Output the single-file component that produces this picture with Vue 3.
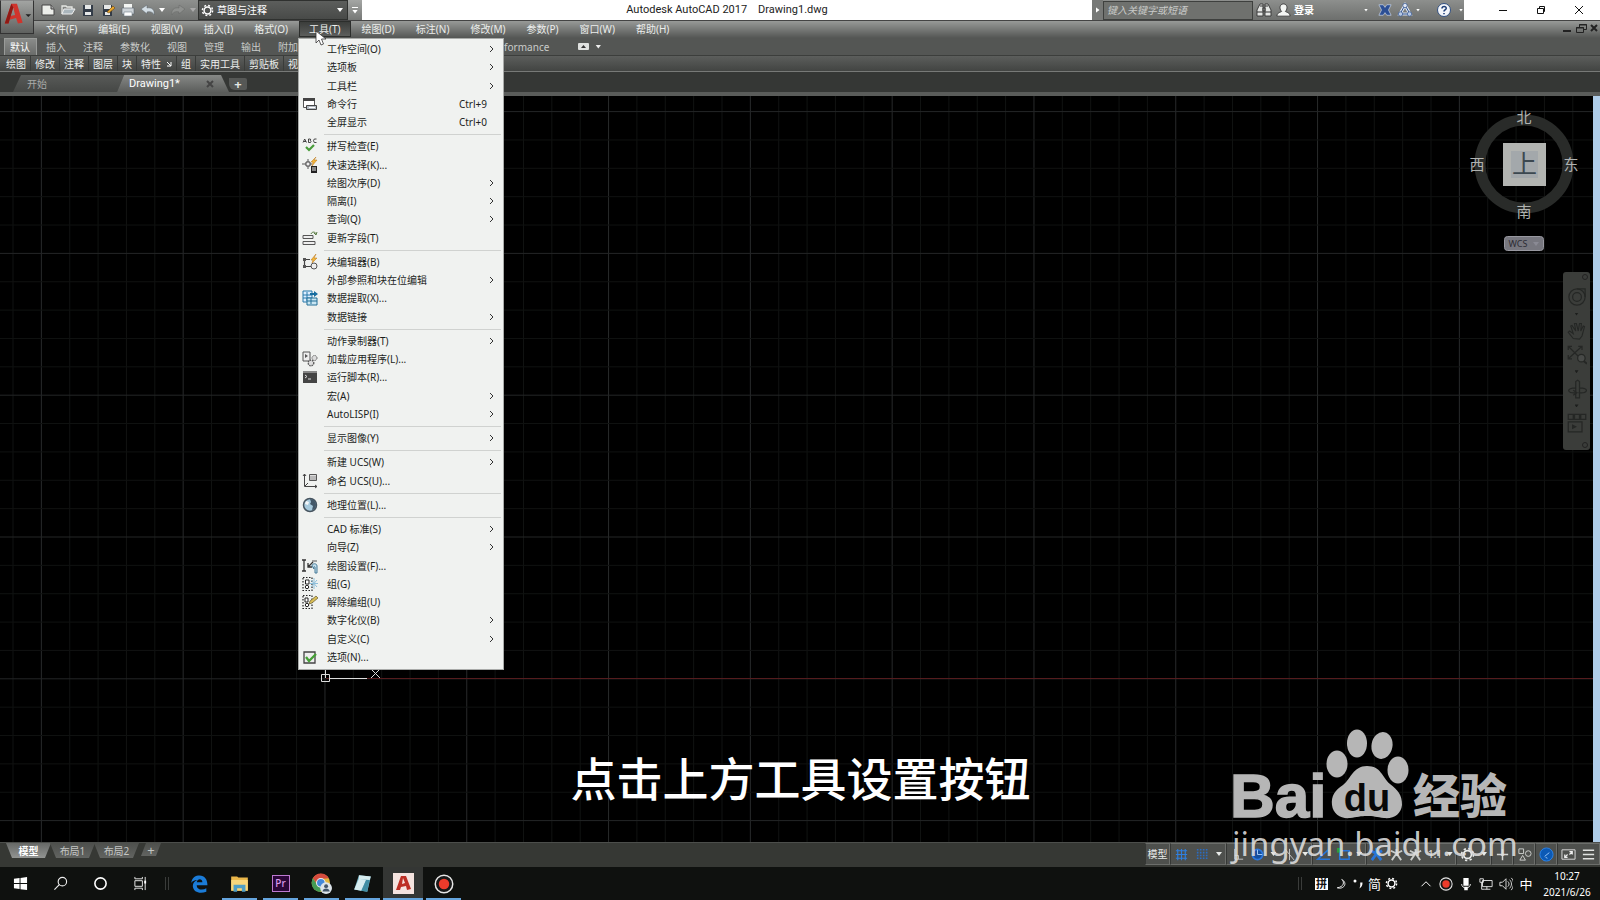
<script setup>
import { ref } from 'vue'

const icons = {
  newFile: '<path d="M2 3h9l3 4v6H2z" fill="#eceeea" stroke="#444"/><path d="M11 3v4h3" fill="#aaa" stroke="#444"/>',
  open: '<path d="M2 12V4h4l1 1h5v2" fill="none" stroke="#e6e8e4" stroke-width="1.3"/><path d="M4 7h11l-3 5H2z" fill="#aab6bc" stroke="#eee"/>',
  save: '<path d="M3 3h10v11H3z" fill="#333c48"/><path d="M5 3h6v4H5zM5 10h6v3H5z" fill="#e6e8e8"/>',
  saveAs: '<path d="M3 3h9v11H3z" fill="#333c48"/><path d="M4 3h7v4H4zM5 10h5v3H5z" fill="#e6e8e8"/><path d="M7 10l6-6 2 2-6 5z" fill="#e6a52e" stroke="#6a4510" stroke-width=".6"/>',
  print: '<path d="M4 2h8v4H4z" fill="#f4f6f4"/><path d="M2 6h12v6H2z" fill="#cdd3d8" stroke="#59636b" stroke-width=".6"/><path d="M4 10h8v4H4z" fill="#fff" stroke="#73808a" stroke-width=".6"/>',
  undo: '<path d="M1 7l6-4v3c5-1 8 2 7 7-1-3-4-4-7-3v2z" fill="#d3dde4" stroke="#59636b" stroke-width=".5"/>',
  redo: '<path d="M15 7L9 3v3C4 5 1 8 2 13c1-3 4-4 7-3v2z" fill="#8e908e" stroke="#646664" stroke-width=".5"/>',
  gear: '<circle cx="8" cy="8" r="4.2" fill="none" stroke="currentColor" stroke-width="1.8"/><circle cx="8" cy="8" r="6.3" fill="none" stroke="currentColor" stroke-width="1.8" stroke-dasharray="2.4 2.55"/>',
  bino: '<path d="M4 2h3v12H1V8zM12 2H9v12h6V8zM7 6h2v3H7z" fill="#e4e6e4" stroke="#333" stroke-width=".9"/><path d="M1 10h6M9 10h6M4 4h3M9 4h3" stroke="#333"/>',
  user: '<path d="M1 14c0-4 4-4 5-5-3-3-2-8 2-8s5 5 2 8c1 1 5 1 5 5z" fill="#f3f5f3" stroke="#333" stroke-width=".9"/>',
  exchange: '<path d="M1 2h5l2 3 2-3h5l-3 6 3 6h-5l-2-3-2 3H1l3-6z" fill="#2c4f94" stroke="#dbe4f4" stroke-width=".7"/>',
  a360: '<path d="M8 3L3 12h10z" fill="none" stroke="#dce4f2" stroke-width="3"/><path d="M8 3L3 12h10z" fill="none" stroke="#33558e"/><circle cx="8" cy="3.500" r="2.200" fill="#dce4f2" stroke="#33558e" stroke-width=".7"/><circle cx="3.500" cy="12" r="2.200" fill="#b7c8e4" stroke="#33558e" stroke-width=".7"/><circle cx="12.500" cy="12" r="2.200" fill="#b7c8e4" stroke="#33558e" stroke-width=".7"/>',
  help: '<circle cx="8" cy="8" r="6.500" fill="#f4f6fa" stroke="#315082"/><path d="M6 6.500c0-3 4.500-2.500 4.200 0C10 8 8 8 8 9.500M8 11v1.300" fill="none" stroke="#1f3f77" stroke-width="1.600"/>',
  cmdline: '<path d="M1.500 2.500h11v9h-11z" fill="#fff" stroke="#555"/><path d="M1 2h12v3H1z" fill="#444"/><path d="M4.500 9.500h10v4h-10z" fill="#b4bcc4" stroke="#444"/><path d="M7 11.500h6" stroke="#fff"/>',
  spell: '<path d="M1 4.500L2.700 1l1.800 3.500M6.500 1v3.500h2L9 3.500l-.7-.7.5-.8-.5-1zM14.500 1h-2.200l-.8 1.700.8 1.800h2.200M2 3.500h2" fill="none" stroke="#333" stroke-width=".9"/><path d="M4 9l3 3 5-5" fill="none" stroke="#489c39" stroke-width="2.200"/>',
  quick: '<path d="M0 7h10M6 2v10" stroke="#555"/><path d="M4 5h4v4H4z" fill="#eee" stroke="#444"/><path d="M14 0L9 5h2l-1 4 5-6h-3z" fill="#f2b63a" stroke="#bb7416" stroke-width=".5"/><path d="M9 9h6v7H9z" fill="#222"/><path d="M10 11h4m-4 2h4" stroke="#eee"/>',
  field: '<path d="M1 5.500h10v3H1zM1 11.500h12v3H1z" fill="#eee" stroke="#555"/><path d="M9 4c1-3 5-2 5 0m1-2l-1 3-2-2" fill="none" stroke="#597c43"/>',
  block: '<path d="M9 12.500H2.500v-7H8" fill="none" stroke="#444" stroke-width="1.200"/><path d="M1 4h3v3H1zM1 11h3v3H1z" fill="#555"/><circle cx="12" cy="12" r="3" fill="#eee" stroke="#555"/><path d="M14 0L9 6h2l-1 3 5-5h-3z" fill="#f2b63a" stroke="#bb7416" stroke-width=".5"/>',
  extract: '<path d="M1 1h9v11H1z" fill="#def" stroke="#2678aa"/><path d="M1 5h9M1 8h9M5 2v9" stroke="#2678aa"/><path d="M8 3h4V1l4 3-4 3V5H8z" fill="#176c9f"/><path d="M5 8h10v7H5z" fill="#c9e6f3" stroke="#236e96"/><path d="M5 11h10M9 8v6" stroke="#236e96"/>',
  load: '<path d="M1 1h7v9H1z" fill="#eee" stroke="#555"/><path d="M3 3l3 2-3 2z" fill="#555"/><circle cx="12.500" cy="7" r="2.500" fill="#ddd" stroke="#666" stroke-dasharray="1.500 .8"/><circle cx="9" cy="12" r="2.800" fill="#ddd" stroke="#555" stroke-width="1.300" stroke-dasharray="1.500 .8"/>',
  script: '<path d="M1 2h14v12H1z" fill="#444"/><path d="M1 2h14v2H1z" fill="#888"/><path d="M3 6l2 1.500L3 9M6 10h3" fill="none" stroke="#ddd"/>',
  ucs: '<path d="M2.500 1v12.500H15M1 3l1.500-2L4 3M13 12l2 1.500-2 1.500M3 13l3-3" fill="none" stroke="#444"/><path d="M7.500 1.500h7v6h-7z" fill="#ddd" stroke="#555"/><path d="M8 4h6M8 6h6" stroke="#777" stroke-width=".7"/>',
  geo: '<circle cx="8" cy="8" r="6.500" fill="#a7cadd" stroke="#46545f" stroke-width="1.500"/><path d="M8 2c4 0 6 3 6 6s-2 5-4 5l1-4-3-2 1-2z" fill="#435869"/><path d="M4 4l3 1-1 3-3-1z" fill="#f5f7f8"/>',
  drafting: '<path d="M2 2v11M0 2h4M0 13h4M6 9l5-5M6 5v4h4" fill="none" stroke="#333" stroke-width="1.300"/><path d="M10 3h5" stroke="#555"/><path d="M10 8c0-3 5-3 5 0v7h-2v-6c-1-1-2 0-1 2z" fill="#c5e0ee" stroke="#467b98"/>',
  group: '<path d="M1 1.500h9v13H1z" fill="none" stroke="#222" stroke-width="1.200" stroke-dasharray="1.500 1.500"/><path d="M3.500 4h3.500v4H3.500z" fill="#fff" stroke="#222"/><circle cx="5" cy="11" r="1.700" fill="#fff" stroke="#222"/><path d="M12 2v11M8 7.500h8M9 4l6 7M15 4l-6 7" stroke="#8ebfda"/>',
  ungroup: '<path d="M1 1.500h9v13H1z" fill="none" stroke="#222" stroke-width="1.200" stroke-dasharray="1.500 1.500"/><path d="M3 4h3v4H3z" fill="#fff" stroke="#222"/><circle cx="5" cy="11" r="1.700" fill="#fff" stroke="#222"/><path d="M7 10l1-3 6-5 2 2-6 5z" fill="#d9bd55" stroke="#665b32" stroke-width=".7"/>',
  options: '<path d="M2 3h11v11H2z" fill="#eee" stroke="#444" stroke-width="1.300"/><path d="M4 8l3 4 7-7" fill="none" stroke="#45a036" stroke-width="2.300"/>',
  grid: '<path d="M4 2v12M8 2v12M12 2v12M2 4h12M2 8h12M2 12h12" stroke="#2f7fe0" stroke-width="1.200"/>',
  snap: '<path d="M2 3h12M2 6h12M2 9h12M2 12h12" stroke="#2a6cc4" stroke-width="1.700" stroke-dasharray="1.700 1.500"/>',
  ortho: '<path d="M5 2v11h9M5 9h4v4" fill="none" stroke="#c6c8c6"/>',
  polar: '<circle cx="8" cy="8" r="5.500" fill="#144f9f" stroke="#2c78dd" stroke-width="1.700"/><path d="M8 8V3M8 8h5" stroke="#a8cdf9"/>',
  iso: '<path d="M3 2l10 12M8 2v12" stroke="#c6c8c6"/>',
  track: '<path d="M15 13H2L13 3" fill="none" stroke="#2775da" stroke-width="1.700"/>',
  osnap: '<path d="M4 4h10v9H4z" fill="none" stroke="#2775da" stroke-width="1.700"/><path d="M1 1h5v5H1z" fill="#2f9d3c"/>',
  scaleOn: '<path d="M8 1v6m0 0l-5 7M8 7l5 7M2 4l6 3 6-3" fill="none" stroke="#2874d8" stroke-width="3"/>',
  scale: '<path d="M8 2v5m0 0l-5 7M8 7l5 7M2 4l6 3 6-3" fill="none" stroke="#c9cbc9" stroke-width="2"/>',
  plus: '<path d="M8 2v12M2 8h12" stroke="#d5d7d5" stroke-width="1.600"/>',
  shapes: '<path d="M2 2h5v5H2zM3 14l3-5 3 5z" fill="none" stroke="#d0d2d0"/><circle cx="12" cy="7" r="3" fill="none" stroke="#d0d2d0"/>',
  perf: '<circle cx="8" cy="8" r="7" fill="#0b59b5" stroke="#2c84e7"/><path d="M6 10l5-4M7 11l2 1" stroke="#9bc7fa"/>',
  clean: '<path d="M1 3h14v10H1z" fill="none" stroke="#ddd"/><path d="M4 11l3-3M4 8v3h3M9 8l3-3M9 5h3v3" fill="none" stroke="#eee" stroke-width="1.300"/>',
  burger: '<path d="M2 3.500h12M2 8h12M2 12.500h12" stroke="#e0e2e0" stroke-width="1.500"/>',
  wheel: '<circle cx="8" cy="8" r="6.500" fill="none" stroke="#252725"/><circle cx="8" cy="8" r="3.500" fill="none" stroke="#252725"/><path d="M8 1.500h6.500V8" fill="none" stroke="#252725"/>',
  pan: '<path d="M5 14L1 9l1-1 3 2-2-6 1-.5L7 8 6 2h1.500L9 8l1-6h1.500l-.5 6 2-4 1 .5L12 12l-2 2.500z" fill="none" stroke="#252725" stroke-width=".9"/>',
  zoomExt: '<path d="M1 4V1h3M1 1l12 12M9 1h3v3M12 1L1 11M1 8v3h3" fill="none" stroke="#252725"/><circle cx="11.500" cy="10.500" r="3" fill="#484a48" stroke="#252725"/><path d="M13.500 13l2.500 2" stroke="#252725" stroke-width="1.500"/>',
  orbit: '<path d="M7 15V2l1.500-1L10 2v13zM7 7c-8 0-7 5 0 4M10 7c8 0 7 5-1 4M5 9l3 2-3 2" fill="none" stroke="#252725"/>',
  motion: '<path d="M1 1h4v4H1zM6 1h4v4H6zM11 1h4v4h-4zM1 7h11v8H1z" fill="none" stroke="#252725"/><path d="M4 9l4 2-4 2z" fill="#252725"/>',
  win: '<path d="M1 3l6-.8v5.300H1zM8 2l7-1v6.500H8zM1 8.500h6v5.300L1 13zM8 8.500h7V15l-7-1z" fill="#fff"/>',
  search: '<circle cx="10" cy="6" r="4.500" fill="none" stroke="#eee" stroke-width="1.200"/><path d="M7 9l-5.500 5.500" stroke="#eee" stroke-width="1.200"/>',
  cortana: '<circle cx="8" cy="8" r="6" fill="none" stroke="#fff" stroke-width="1.700"/>',
  taskview: '<path d="M2 5h8v6H2zM2 1v2h8V1M2 15v-2h8v2M13 1v14" fill="none" stroke="#eee"/><path d="M12 5h2v3h-2z" fill="#fff"/>',
  edge: '<path d="M1 7C2 2 5 .5 8.500 .5 13 .5 15.500 4 15.500 9H6c0 4 5 5 8.500 2.800v3C9 17 3 15.500 2.500 10 2.400 7.500 4 5.500 6.500 4.500 3.500 4.700 2 5.700 1 7zM6 6.500h5C11 3 6.500 3 6 6.500z" fill="#1b7cd8"/>',
  folder: '<path d="M1 2h5l1 1h8v11H1z" fill="#e9b64a"/><path d="M1 5h14v9H1z" fill="#f9d77c"/><path d="M3 9h10v6h-3v-3H6v3H3z" fill="#4f9fc6"/>',
  chrome: '<circle cx="7.500" cy="7.500" r="7" fill="#e2b63d"/><path d="M1.400 4A7 7 0 0 1 13.600 4L7.500 4.500 5 9z" fill="#d54b3e"/><path d="M1.400 4A7 7 0 0 0 7 14.500L9 10 4.800 9z" fill="#449b55"/><circle cx="7.500" cy="7.500" r="3.300" fill="#4489da" stroke="#eee" stroke-width=".8"/><circle cx="11.500" cy="11.500" r="4.500" fill="#dce4ea"/><circle cx="11.500" cy="10" r="1.500" fill="#43566a"/><path d="M8.800 14c0-3 5.400-3 5.400 0z" fill="#43566a"/>',
  notepad: '<path d="M5 1l10 1-3 13L1 13z" fill="#7cb9cb"/><path d="M5 1l10 1-1 3L5 4zM5 4l6 1-4 9-6-1z" fill="#d7edf0"/><path d="M11 5l3 0-2 10-5-1z" fill="#418ea4"/>',
  rec: '<circle cx="8" cy="8" r="7" fill="#181818" stroke="#e6e6e6" stroke-width="1.200"/><circle cx="8" cy="8" r="4.200" fill="#ec3b2b"/>',
  moon: '<path d="M9 2c4 3 3 10-6 11 8 3 15-6 6-11z" fill="none" stroke="#eee" stroke-width="1.300"/>',
  punct: '<circle cx="4" cy="4" r="2" fill="#fff"/><path d="M11 6h3c0 4-1 6-4 8l1-4z" fill="#fff"/>',
  up: '<path d="M2 11l6-6 6 6" fill="none" stroke="#fff" stroke-width="1.300"/>',
  mic: '<path d="M5 1h6v9H5zM6 11h4v4H6z" fill="#fff"/><path d="M3 8c0 6 10 6 10 0" fill="none" stroke="#fff"/>',
  net: '<path d="M4 4h11v7H4zM9 11v3M6 14h7M1 2h4v4H1zM3 6v8h3" fill="none" stroke="#eee"/>',
  speaker: '<path d="M1 6h3l4-4v12l-4-4H1zM10 5c2 2 2 4 0 6M12 3c3 3 3 7 0 10M14 1c4 4 3 10 0 14" fill="none" stroke="#eee"/>',
}

const menus = ['文件(F)', '编辑(E)', '视图(V)', '插入(I)', '格式(O)', '工具(T)', '绘图(D)', '标注(N)', '修改(M)', '参数(P)', '窗口(W)', '帮助(H)']
const ribbonTabs = ['默认', '插入', '注释', '参数化', '视图', '管理', '输出', '附加模块', 'A360', '精选应用', 'BIM 360', 'Performance']
const panels = ['绘图', '修改', '注释', '图层', '块', '特性', '组', '实用工具', '剪贴板', '视图']

const sub = (t) => ({ t, sub: true })
const toolGroups = [
  [sub('工作空间(O)'), sub('选项板'), sub('工具栏'), { t: '命令行', icon: 'cmdline', key: 'Ctrl+9' }, { t: '全屏显示', key: 'Ctrl+0' }],
  [{ t: '拼写检查(E)', icon: 'spell' }, { t: '快速选择(K)...', icon: 'quick' }, sub('绘图次序(D)'), sub('隔离(I)'), sub('查询(Q)'), { t: '更新字段(T)', icon: 'field' }],
  [{ t: '块编辑器(B)', icon: 'block' }, sub('外部参照和块在位编辑'), { t: '数据提取(X)...', icon: 'extract' }, sub('数据链接')],
  [sub('动作录制器(T)'), { t: '加载应用程序(L)...', icon: 'load' }, { t: '运行脚本(R)...', icon: 'script' }, sub('宏(A)'), sub('AutoLISP(I)')],
  [sub('显示图像(Y)')],
  [sub('新建 UCS(W)'), { t: '命名 UCS(U)...', icon: 'ucs' }],
  [{ t: '地理位置(L)...', icon: 'geo' }],
  [sub('CAD 标准(S)'), sub('向导(Z)'), { t: '绘图设置(F)...', icon: 'drafting' }, { t: '组(G)', icon: 'group' }, { t: '解除编组(U)', icon: 'ungroup' }, sub('数字化仪(B)'), sub('自定义(C)'), { t: '选项(N)...', icon: 'options' }],
]

const statusGroups = [
  { w: 'w24', items: ['模型'] },
  { w: 'w56', items: ['grid', 'snap', '▾'] },
  { w: 'w86', items: ['ortho', 'polar', '▾', 'iso', '▾'] },
  { w: 'w54', items: ['track', 'osnap', '▾'] },
  { w: 'w90', items: ['scaleOn', 'scale', 'scale', '1:1', '▾'] },
  { w: 'w35', items: ['gear', '▾'] },
  { w: 'w22', items: ['plus'] },
  { w: 'w22', items: ['shapes'] },
  { w: 'w22', items: ['perf'] },
  { w: 'w43', items: ['clean', 'burger'] },
]

const navItems = ['wheel', '▾', 'pan', 'zoomExt', '▾', 'orbit', '▾', 'motion']

const step = 28.36
const cols = Array.from({ length: 100 }, (_, i) => ({ p: 13 + i * step, major: i % 5 === 1 }))
const rows = Array.from({ length: 60 }, (_, i) => ({ p: 15.600 + i * step, major: i % 5 === 0 }))

const workspace = ref('草图与注释')
const query = ref('')
</script>

<template>
  <div class="app">
    <header class="head">
      <button class="logo" aria-label="应用程序菜单">
        <svg width="34" height="34" viewBox="0 0 34 34"><path d="M4 24L11 3h6l6 20-5 1-2-6-7 2-1 4zM10 16l5-1-2-8z" fill="#d0342c" fill-rule="evenodd"/><path d="M11 3l2 4-5 17H4z" fill="#8f1914"/><path d="M26 14h6l-3 3z" fill="#222"/></svg>
      </button>
      <div class="title">
        <div class="qat">
          <button v-for="n in ['newFile', 'open', 'save', 'saveAs', 'print', 'undo']" :key="n" class="q" :aria-label="n"><svg class="i" viewBox="0 0 16 16" v-html="icons[n]"></svg></button>
          <i class="arr q8"></i>
          <button class="q q22" aria-label="redo"><svg class="i" viewBox="0 0 16 16" v-html="icons.redo"></svg></button>
          <i class="arr q8 dim"></i>
        </div>
        <label class="combo">
          <svg class="i" viewBox="0 0 16 16" v-html="icons.gear"></svg>
          <select v-model="workspace" aria-label="工作空间"><option>草图与注释</option></select>
          <i class="arr"></i>
        </label>
        <button class="qmore" aria-label="自定义快速访问工具栏"><b></b><i class="arr"></i></button>
        <h1>Autodesk AutoCAD 2017 &nbsp;&nbsp; Drawing1.dwg</h1>
        <div class="info">
          <button class="tri" aria-label="折叠"><i></i></button>
          <input v-model="query" aria-label="搜索" placeholder="键入关键字或短语">
          <button class="q" aria-label="搜索帮助"><svg class="i" viewBox="0 0 16 16" v-html="icons.bino"></svg></button>
          <button class="login"><svg class="i" viewBox="0 0 16 16" v-html="icons.user"></svg>登录</button>
          <i class="arr"></i>
          <button class="q exch" aria-label="Exchange"><svg class="i" viewBox="0 0 16 16" v-html="icons.exchange"></svg></button>
          <button class="q" aria-label="A360"><svg class="i" viewBox="0 0 16 16" v-html="icons.a360"></svg></button>
          <i class="arr"></i>
          <button class="q help" aria-label="帮助"><svg class="i" viewBox="0 0 16 16" v-html="icons.help"></svg></button>
          <i class="arr"></i>
        </div>
        <div class="wc">
          <button aria-label="最小化"><svg width="10" height="10"><path d="M1 5.500h8" stroke="#111"/></svg></button>
          <button aria-label="还原"><svg width="10" height="10"><path d="M1.500 3.500h6v5h-6zM3.500 3V1.500h5v5H8" fill="none" stroke="#111"/></svg></button>
          <button aria-label="关闭"><svg width="10" height="10"><path d="M1 1l8 8M9 1l-8 8" stroke="#111"/></svg></button>
        </div>
      </div>
      <nav class="menubar">
        <button v-for="m in menus" :key="m" :class="{ on: m === '工具(T)' }">{{ m }}</button>
        <span class="docwc">
          <svg width="38" height="12" viewBox="0 0 38 12"><path d="M1 9h8" stroke="#222" stroke-width="2"/><path d="M14.500 5.500h7v5h-7zM17.500 5V2.500h7v5H22" fill="none" stroke="#222"/><path d="M14 6h8M17 3h8" stroke="#222"/><path d="M29 3l6 6M35 3l-6 6" stroke="#222" stroke-width="2"/></svg>
        </span>
      </nav>
    </header>

    <nav class="rtabs">
      <button v-for="(t, i) in ribbonTabs" :key="t" :class="{ on: i === 0 }">{{ t }}</button>
      <button class="cam" aria-label="最小化面板"><svg width="11" height="7"><rect width="11" height="7" rx="1" fill="#dfe1df"/><path d="M3 5h5L5.500 2z" fill="#333"/></svg><i class="arr"></i></button>
    </nav>
    <div class="panels">
      <button v-for="p in panels" :key="p">{{ p }}<svg v-if="p === '特性'" width="6" height="6"><path d="M1 1l4 4M5 1v4H1" fill="none" stroke="#fff"/></svg></button>
    </div>
    <div class="ftabs">
      <button class="ft start">开始</button>
      <button class="ft cur">Drawing1*<svg width="8" height="8"><path d="M1 1l6 6M7 1L1 7" stroke="#444" stroke-width="2"/></svg></button>
      <button class="ft add" aria-label="新图形">+</button>
    </div>

    <main class="canvas">
      <svg class="sheet" width="100%" height="100%">
        <g v-for="c in cols" :key="'c' + c.p"><line :x1="c.p" :x2="c.p" y1="0" y2="100%" :stroke="c.major ? '#282a2b' : '#111312'"/></g>
        <g v-for="r in rows" :key="'r' + r.p"><line x1="0" x2="100%" :y1="r.p" :y2="r.p" :stroke="r.major ? '#242627' : '#101211'"/></g>
        <line x1="326" x2="100%" y1="582.500" y2="582.500" stroke="#551c1e"/>
        <path d="M321.500 578.500h8v7h-8zM325.500 582V560M329 582.500h38M371 573l9 9M380 573l-9 9" fill="none" stroke="#ddd"/>
      </svg>
      <svg class="cube" width="120" height="150" viewBox="0 0 120 150">
        <circle cx="60" cy="58" r="44" fill="none" stroke="#292b29" stroke-width="11"/>
        <rect x="39" y="37" width="43" height="43" fill="#b2b4b1"/>
        <rect x="47" y="45" width="27" height="27" fill="#a3a8ab"/>
        <text x="60.500" y="67" font-size="25" fill="#3c4850" class="song">上</text>
        <g fill="#b0b2b0" font-size="15" class="song"><text x="60" y="17">北</text><text x="60" y="111">南</text><text x="13" y="64">西</text><text x="107" y="64">东</text></g>
        <rect x="40.500" y="130.500" width="39" height="14" rx="3" fill="#77777f" stroke="#9898a0"/>
        <text x="54" y="141" font-size="9" fill="#2c2c34">WCS</text>
        <path d="M69 136h6l-3 4z" fill="#8a8a94"/>
      </svg>
      <div class="nav">
        <i class="dot"></i>
        <template v-for="(n, i) in navItems" :key="i">
          <span v-if="n === '▾'" class="nd"><i class="arr"></i></span>
          <button v-else :aria-label="n"><svg width="20" height="20" viewBox="0 0 16 16" v-html="icons[n]"></svg></button>
        </template>
        <i class="dot last"></i>
      </div>
      <p class="caption">点击上方工具设置按钮</p>
    </main>

    <footer class="status">
      <div class="lts">
        <button class="on">模型</button><button>布局1</button><button>布局2</button><button class="plus" aria-label="新建布局">+</button>
      </div>
      <div class="sg">
        <div v-for="(g, i) in statusGroups" :key="i" :class="['g', g.w]">
          <template v-for="(n, j) in g.items" :key="j">
            <i v-if="n === '▾'" class="arr"></i>
            <button v-else :aria-label="n"><svg v-if="icons[n]" class="i" viewBox="0 0 16 16" v-html="icons[n]"></svg><template v-else>{{ n }}</template></button>
          </template>
        </div>
      </div>
    </footer>

    <div class="task">
      <button v-for="n in ['win', 'search', 'cortana', 'taskview']" :key="n" class="t40" :aria-label="n"><svg width="15" height="15" viewBox="0 0 16 16" v-html="icons[n]"></svg></button>
      <i class="grip"></i>
      <button class="t41" aria-label="Edge"><svg width="18" height="18" viewBox="0 0 16 16" v-html="icons.edge"></svg></button>
      <button class="t41 run" aria-label="资源管理器"><svg width="19" height="19" viewBox="0 0 16 16" v-html="icons.folder"></svg></button>
      <button class="t41 run"><span class="pr">Pr</span></button>
      <button class="t41 run" aria-label="Chrome"><svg width="21" height="21" viewBox="0 0 16 16" v-html="icons.chrome"></svg></button>
      <button class="t41 run" aria-label="记事本"><svg width="19" height="19" viewBox="0 0 16 16" v-html="icons.notepad"></svg></button>
      <button class="t40 run active" aria-label="AutoCAD"><svg width="21" height="21" viewBox="0 0 21 21"><rect width="21" height="21" fill="#f5e3df"/><path d="M3 17L8 3h5l5 13-4 1-1-4-5 1-1 3zM9 11l3-1-2-5z" fill="#bd2f25" fill-rule="evenodd"/></svg></button>
      <button class="t41 run" aria-label="录屏"><svg width="20" height="20" viewBox="0 0 16 16" v-html="icons.rec"></svg></button>
      <div class="tray">
        <i class="grip"></i>
        <span class="t20 ime">拼</span>
        <span v-for="n in ['moon', 'punct']" :key="n" class="t17"><svg width="12" height="12" viewBox="0 0 16 16" v-html="icons[n]"></svg></span>
        <span class="t17 han">简</span>
        <span class="t17"><svg width="13" height="13" viewBox="0 0 16 16" v-html="icons.gear"></svg></span>
        <span class="t20 chev"><svg width="12" height="12" viewBox="0 0 16 16" v-html="icons.up"></svg></span>
        <span v-for="n in ['rec', 'mic', 'net', 'speaker']" :key="n" class="t20"><svg width="14" height="14" viewBox="0 0 16 16" v-html="icons[n]"></svg></span>
        <span class="t20 han">中</span>
        <time class="clock">10:27<br>2021/6/26</time>
      </div>
    </div>

    <div class="drop">
      <div v-for="(g, i) in toolGroups" :key="i" class="grp" :style="{ flexGrow: g.length }">
        <button v-for="it in g" :key="it.t">
          <span class="ic"><svg v-if="it.icon" class="i" viewBox="0 0 16 16" v-html="icons[it.icon]"></svg></span>
          <span class="tx">{{ it.t }}</span>
          <kbd v-if="it.key">{{ it.key }}</kbd>
          <svg v-if="it.sub" class="gt" width="5" height="8"><path d="M1 1l3 3-3 3" fill="none" stroke="#333"/></svg>
        </button>
      </div>
    </div>
    <svg class="cursor" width="12" height="17" viewBox="0 0 12 17"><path d="M1 1v12l3-3 2 5 2.500-1-2-5H11z" fill="#fff" stroke="#333" stroke-width=".8"/></svg>

    <svg class="mark" width="300" height="140" viewBox="0 0 300 140">
      <g fill="#b6b6b6">
        <text x="16" y="92" class="bai">Bai</text>
        <ellipse cx="123" cy="39" rx="10.500" ry="13.500"/><ellipse cx="143" cy="18.500" rx="10" ry="14"/><ellipse cx="168" cy="20.500" rx="10.500" ry="13.500" transform="rotate(10 168 20.500)"/><ellipse cx="184" cy="45" rx="10.500" ry="13.500"/>
        <path d="M153 41c-14 0-16 13-24 19-8 5-12 11-11 20 1 9 9 14 18 13 7-1 11-2 17-2s10 1 17 2c10 1 17-4 18-13 0-10-4-15-12-21-8-7-9-18-23-18z"/>
        <text x="199" y="88" class="jy">经验</text>
      </g>
      <text x="153" y="86" class="du">du</text>
      <text x="18" y="131" class="url">jingyan.baidu.com</text>
    </svg>
  </div>
</template>

<style>
body { background: #000; }
</style>

<style scoped>
.app { position: relative; display: flex; flex-direction: column; min-height: 100vh; overflow: hidden; font: 10px/16px "Noto Sans", "Noto Sans CJK SC", sans-serif; color: #e4e6e4; background: #000; }
* { box-sizing: border-box; }
button, input, select { font: inherit; color: inherit; border: 0; padding: 0; margin: 0; background: none; white-space: nowrap; }
button { display: flex; align-items: center; justify-content: center; }
.i { width: 16px; height: 16px; flex: none; display: block; }
.arr { width: 6px; height: 4px; flex: none; background: currentColor; clip-path: polygon(0 0, 100% 0, 50% 100%); }

.head { display: grid; grid-template-columns: 34px 1fr; grid-template-rows: 20px 18px; background: #5a5c5a; }
.logo { grid-row: 1 / 3; height: 34px; background: linear-gradient(#a2a4a2, #5f615f); border: 1px solid #333; border-top-color: #888; }
.title { display: flex; background: #fff; }
.qat { display: flex; align-items: center; width: 164px; padding-left: 4px; background: linear-gradient(#8e908e, #6f716f); color: #fff; }
.q { width: 20px; height: 20px; }
.q8 { margin: 0 2px 0 1px; }
.q22 { width: 22px; }
.dim { color: #aaa; }
.combo { display: flex; align-items: center; width: 150px; padding: 0 4px 0 2px; gap: 3px; background: linear-gradient(#5c5e5c, #484a48); border: 1px solid #2f312f; color: #fff; }
.combo .i { width: 13px; height: 13px; }
.combo select { flex: 1; appearance: none; min-width: 0; outline: 0; }
.qmore { width: 14px; flex-direction: column; gap: 2px; background: linear-gradient(#a4a6a4, #767876); color: #fff; }
.qmore b { width: 6px; height: 1px; background: #fff; }
h1 { flex: 1; margin: 0; font: 400 11px/20px Roboto, sans-serif; color: #222; text-align: center; white-space: pre; }
.info { display: flex; align-items: center; width: 372px; background: linear-gradient(#8d8f8d, #6d6f6d); color: #fff; }
.info .arr { width: 4px; height: 3px; margin: 0 1px; }
.tri { width: 11px; height: 20px; background: #777977; }
.tri i { width: 4px; height: 6px; background: #fff; clip-path: polygon(0 0, 100% 50%, 0 100%); }
.info input { width: 150px; height: 19px; padding: 0 3px; margin-right: 1px; background: #6f716e; border: 1px solid #3e403e; font-style: italic; outline: 0; }
.info input::placeholder { color: #c9cbc9; opacity: 1; }
.login { gap: 3px; padding-left: 2px; margin-right: 49px; font-weight: 700; }
.login .i { width: 15px; height: 15px; }
.exch { margin-left: 6px; }
.exch .i { width: 14px; height: 14px; }
.help { margin: 0 4px 0 13px; }
.wc { display: flex; width: 136px; padding-left: 20px; }
.wc button { width: 38px; }

.menubar { display: flex; align-items: stretch; gap: 1px; padding: 0 0 1px 2px; background: linear-gradient(#989a98, #545654); border-top: 1px solid #444; color: #eceeec; }
.menubar button { padding: 0 10px 1px; }
.menubar .on { background: linear-gradient(#3b3d3b, #5c5e5c); border: 1px solid #2c2e2c; padding: 0 9px 1px; }
.docwc { margin: 1px 0 0 auto; }

.rtabs { display: flex; height: 17px; padding-left: 4px; background: #545654; color: #c9cbc9; }
.rtabs button { padding: 0 8px 0 9px; }
.rtabs .on { padding: 0 6px 0 5px; background: linear-gradient(#8a8c8a, #6a6c6a); color: #fff; border: 1px solid #999b99; border-bottom: 0; }
.rtabs .cam { gap: 6px; margin-left: 12px; color: #eee; }
.panels { display: flex; height: 17px; padding-left: 2px; background: linear-gradient(#5c5e5c, #424442); border-top: 1px solid #3c3e3c; border-bottom: 1px solid #777977; color: #eceeec; }
.panels button { padding: 0 4px; gap: 5px; border-right: 1px solid #3a3c3a; }
.ftabs { display: flex; align-items: flex-end; height: 24px; padding-left: 13px; background: #353735; border-bottom: 4px solid #5a5c5a; }
.ft { height: 17px; justify-content: flex-start; }
.start { width: 111px; padding-left: 14px; color: #a9aba9; background: linear-gradient(#585a58, #454745); clip-path: polygon(8px 0, 100% 0, 104px 100%, 0 100%); }
.cur { width: 112px; margin-left: -7px; padding-left: 12px; font: 400 11px/16px Roboto, sans-serif; gap: 26px; color: #fff; background: linear-gradient(#868886, #5c5e5c); clip-path: polygon(7px 0, 104px 0, 100% 100%, 0 100%); }
.add { width: 18px; height: 12px; margin: 0 0 2px; justify-content: center; font-size: 13px; font-weight: 700; background: #565856; border-radius: 0 2px 2px 6px; }

.canvas { position: relative; flex: 1; min-height: 400px; background: #000; border-right: 7px solid #afcde9; overflow: hidden; }
.sheet { position: absolute; inset: 0; }
.cube { position: absolute; top: 10px; right: 9px; }
.cube text { text-anchor: middle; }
.song { font-family: "Noto Sans CJK SC", sans-serif; }
.nav { position: absolute; top: 176px; right: 3px; width: 27px; height: 178px; padding: 15px 0 17px; display: flex; flex-direction: column; align-items: center; justify-content: space-between; background: #3b3d3a; border-radius: 3px; color: #1c1e1c; }
.nd { padding: 2px 0; }
.nd .arr { display: block; width: 4px; height: 3px; }
.dot { position: absolute; top: 2px; right: 2px; width: 6px; height: 6px; border: 1px solid #222; border-radius: 50%; }
.last { top: auto; bottom: 2px; }
.caption { position: absolute; left: 0; right: 0; bottom: 36px; margin: 0; padding-left: 8px; text-align: center; font: 500 46px/60px "Noto Sans CJK SC", sans-serif; color: #fff; }

.status { display: flex; justify-content: space-between; height: 25px; background: #363834; border-top: 1px solid #4c4e4b; }
.lts { display: flex; padding-left: 6px; height: 15px; color: #c4c6c4; }
.lts button { width: 45px; margin-right: -1px; background: linear-gradient(#4d4f4c, #626461); clip-path: polygon(0 0, 100% 0, 39px 100%, 6px 100%); }
.lts .on { color: #fff; font-weight: 700; background: linear-gradient(#666866, #929492); }
.lts .plus { width: 20px; height: 13px; margin-left: 3px; font-size: 13px; clip-path: polygon(5px 0, 100% 0, 15px 100%, 0 100%); }
.sg { display: flex; height: 22px; }
.g { display: flex; align-items: center; justify-content: space-around; background: #4e504d; border: 1px solid #6c6e6b; border-left-color: #353735; color: #e8eae8; }
.g .i { width: 15px; height: 15px; }
.w22 { width: 22px; } .w24 { width: 25px; } .w35 { width: 35px; } .w43 { width: 43px; } .w54 { width: 54px; } .w56 { width: 56px; } .w86 { width: 86px; } .w90 { width: 90px; }

.task { display: flex; height: 33px; background: #0f110f; color: #fff; }
.t40 { width: 40px; }
.t41 { width: 41px; }
.grip { align-self: center; width: 4px; height: 13px; margin: 0 9px 0 5px; border: solid #3a3c3a; border-width: 0 1px; }
.run { position: relative; }
.run::after { content: ""; position: absolute; left: 3px; right: 3px; bottom: 0; height: 2px; background: #65a5de; }
.active { background: #343634; }
.active::after { left: 0; right: 0; }
.pr { width: 18px; height: 17px; border: 1px solid #bd79d0; background: #2b0638; color: #dc9cec; font-size: 10px; line-height: 14px; font-weight: 500; }
.tray { display: flex; align-items: center; margin-left: auto; }
.tray .grip { margin: 0 8px 0 0; }
.t20 { width: 20px; display: flex; justify-content: center; }
.t17 { width: 17px; display: flex; justify-content: center; }
.ime { width: 13px; margin: 0 4px 0 5px; line-height: 12px; font-size: 11px; background: #fff; color: #111; font-weight: 700; }
.han { font-size: 13px; }
.chev { margin-left: 16px; }
.clock { width: 62px; margin-right: 2px; text-align: center; font-size: 10px; line-height: 16px; }

.drop { position: absolute; z-index: 5; left: 298px; top: 38px; width: 206px; height: 632px; padding: 1px 0 3px; display: flex; flex-direction: column; background: #f0f2f0; border: 1px solid #a9aba9; color: #1c1e1c; }
.grp { display: flex; flex-direction: column; flex-basis: 0; }
.grp + .grp { position: relative; padding-top: 6px; }
.grp + .grp::before { content: ""; position: absolute; left: 25px; right: 2px; top: 3px; height: 1px; background: #d0d2d0; }
.grp button { flex: 1; min-height: 0; justify-content: flex-start; padding: 0 9px 0 3px; line-height: 16px; }
.ic { width: 25px; }
.tx { flex: 1; text-align: left; }
kbd { font: inherit; margin-right: 7px; }
.cursor { position: absolute; z-index: 6; left: 315px; top: 30px; }

.mark { position: absolute; z-index: 7; right: 86px; bottom: 35px; overflow: visible; pointer-events: none; }
.bai { font: 700 62px "Liberation Sans", sans-serif; stroke: #b6b6b6; stroke-width: 1.500; }
.du { font: 700 38px "Liberation Sans", sans-serif; fill: #080808; text-anchor: middle; }
.jy { font: 900 47px "Noto Sans CJK SC", sans-serif; }
.url { font: 400 33px "Noto Sans", sans-serif; fill: #dedede; fill-opacity: .9; }
</style>
